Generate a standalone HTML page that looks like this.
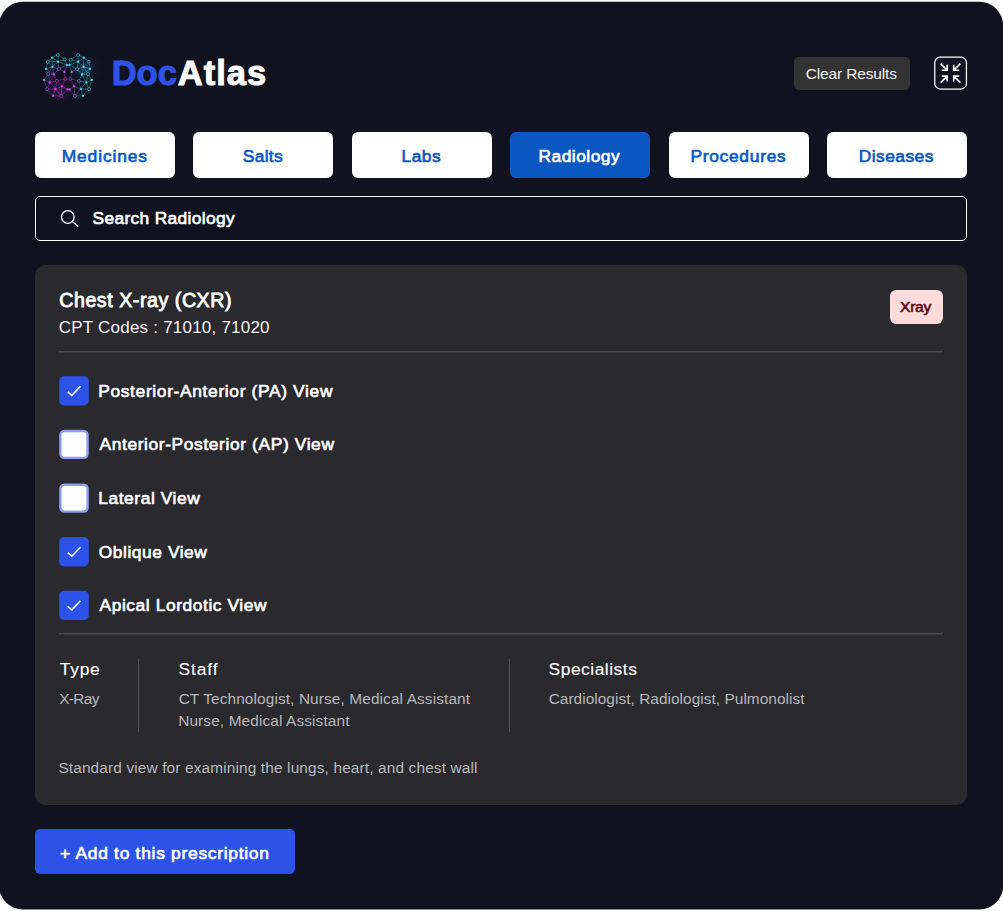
<!DOCTYPE html>
<html lang="en">
<head>
<meta charset="utf-8">
<title>DocAtlas</title>
<style>
*{box-sizing:border-box;margin:0;padding:0}
html,body{width:1003px;height:911px;background:#fff;overflow:hidden}
body{font-family:"Liberation Sans",Arial,sans-serif;color:#fff;position:relative}
.panel{position:absolute;left:0;top:0}
.t{position:absolute;white-space:nowrap;line-height:1;font-weight:400}
h1{font-size:inherit;font-weight:inherit}
.logo{position:absolute;left:30px;top:40px}
.clear{position:absolute;left:794px;top:56.6px;width:116px;height:33px;border-radius:5px;background:#333333}
.shrink{position:absolute;left:930px;top:52px}
.tab{position:absolute;top:132px;width:140px;height:46px;border-radius:6px;background:#fff}
.tab.on{background:#0b57c2}
.search{position:absolute;left:35px;top:196px;width:932px;height:45px;border:1px solid #fff;border-radius:5px}
.search svg{position:absolute;left:23px;top:11px}
.card{position:absolute;left:35px;top:265px;width:932px;height:539.5px;border-radius:10px;background:#29292e}
.badge{position:absolute;left:855px;top:25px;width:53px;height:34px;border-radius:6px;background:#ffdadb;color:#6b0f16}
.hr{position:absolute;left:24px;width:884px;height:2px;background:linear-gradient(#4a4a4f 0,#4a4a4f 50%,#38383d 50%,#38383d 100%)}
.cbs{position:absolute;left:20px;top:105px}
.vr{position:absolute;top:394px;width:1px;height:73px;background:#555559}
.add{position:absolute;left:35px;top:829px;width:259.5px;height:45px;border-radius:5px;background:#2d52e8}
</style>
</head>
<body>
<svg class="panel" width="1003" height="911" viewBox="0 0 1003 911"><rect x="-1" y="1.75" width="1004.2" height="907.8" rx="24" fill="#10121f"/></svg>
<header>
<svg class="logo" width="100" height="70" viewBox="0 0 100 70">
<defs><radialGradient id="gl1"><stop offset="0" stop-color="#1f4a8a" stop-opacity=".42"/><stop offset="1" stop-color="#10121f" stop-opacity="0"/></radialGradient><radialGradient id="gl2"><stop offset="0" stop-color="#7a1fa0" stop-opacity=".36"/><stop offset="1" stop-color="#10121f" stop-opacity="0"/></radialGradient></defs>
<circle cx="57" cy="28" r="17" fill="url(#gl1)"/><circle cx="50" cy="30" r="14" fill="url(#gl1)"/><circle cx="29" cy="50" r="17" fill="url(#gl2)"/>
<g stroke-width="0.45" opacity="0.85">
<line x1="27.9" y1="15.0" x2="22.1" y2="17.7" stroke="rgb(70, 220, 232)"/>
<line x1="27.9" y1="15.0" x2="28.1" y2="21.7" stroke="rgb(70, 220, 232)"/>
<line x1="27.9" y1="15.0" x2="34.9" y2="19.4" stroke="rgb(70, 220, 232)"/>
<line x1="22.1" y1="17.7" x2="17.7" y2="21.9" stroke="rgb(70, 220, 232)"/>
<line x1="22.1" y1="17.7" x2="28.1" y2="21.7" stroke="rgb(70, 220, 232)"/>
<line x1="22.1" y1="17.7" x2="22.4" y2="26.9" stroke="rgb(70, 220, 232)"/>
<line x1="17.7" y1="21.9" x2="28.1" y2="21.7" stroke="rgb(70, 220, 232)"/>
<line x1="17.7" y1="21.9" x2="16" y2="28.9" stroke="rgb(70, 220, 232)"/>
<line x1="17.7" y1="21.9" x2="22.4" y2="26.9" stroke="rgb(70, 220, 232)"/>
<line x1="28.1" y1="21.7" x2="34.9" y2="19.4" stroke="rgb(70, 220, 232)"/>
<line x1="28.1" y1="21.7" x2="22.4" y2="26.9" stroke="rgb(80, 202, 234)"/>
<line x1="28.1" y1="21.7" x2="28.9" y2="28.9" stroke="rgb(96, 173, 237)"/>
<line x1="28.1" y1="21.7" x2="36.9" y2="24.9" stroke="rgb(77, 206, 233)"/>
<line x1="34.9" y1="19.4" x2="36.9" y2="24.9" stroke="rgb(70, 220, 232)"/>
<line x1="16" y1="28.9" x2="22.4" y2="26.9" stroke="rgb(87, 189, 235)"/>
<line x1="16" y1="28.9" x2="18.1" y2="34.1" stroke="rgb(100, 165, 238)"/>
<line x1="16" y1="28.9" x2="23.9" y2="34.4" stroke="rgb(126, 135, 240)"/>
<line x1="22.4" y1="26.9" x2="28.9" y2="28.9" stroke="rgb(118, 142, 240)"/>
<line x1="22.4" y1="26.9" x2="18.1" y2="34.1" stroke="rgb(116, 144, 240)"/>
<line x1="22.4" y1="26.9" x2="23.9" y2="34.4" stroke="rgb(139, 123, 240)"/>
<line x1="28.9" y1="28.9" x2="36.9" y2="24.9" stroke="rgb(114, 146, 240)"/>
<line x1="28.9" y1="28.9" x2="34.4" y2="31.9" stroke="rgb(163, 101, 240)"/>
<line x1="28.9" y1="28.9" x2="23.9" y2="34.4" stroke="rgb(172, 95, 240)"/>
<line x1="36.9" y1="24.9" x2="34.4" y2="31.9" stroke="rgb(127, 134, 240)"/>
<line x1="34.4" y1="31.9" x2="35.4" y2="38.9" stroke="rgb(228, 61, 245)"/>
<line x1="18.1" y1="34.1" x2="23.9" y2="34.4" stroke="rgb(162, 102, 240)"/>
<line x1="18.1" y1="34.1" x2="14" y2="39.9" stroke="rgb(131, 130, 240)"/>
<line x1="18.1" y1="34.1" x2="19.7" y2="42.4" stroke="rgb(178, 91, 241)"/>
<line x1="23.9" y1="34.4" x2="19.7" y2="42.4" stroke="rgb(228, 61, 245)"/>
<line x1="23.9" y1="34.4" x2="26.9" y2="40.9" stroke="rgb(229, 60, 245)"/>
<line x1="14" y1="39.9" x2="19.7" y2="42.4" stroke="rgb(162, 102, 240)"/>
<line x1="14" y1="39.9" x2="17.1" y2="49.1" stroke="rgb(151, 111, 240)"/>
<line x1="19.7" y1="42.4" x2="26.9" y2="40.9" stroke="rgb(229, 60, 245)"/>
<line x1="19.7" y1="42.4" x2="25.4" y2="48.9" stroke="rgb(229, 60, 245)"/>
<line x1="19.7" y1="42.4" x2="17.1" y2="49.1" stroke="rgb(204, 76, 243)"/>
<line x1="26.9" y1="40.9" x2="35.4" y2="38.9" stroke="rgb(231, 58, 245)"/>
<line x1="26.9" y1="40.9" x2="31.9" y2="46.4" stroke="rgb(233, 56, 245)"/>
<line x1="26.9" y1="40.9" x2="25.4" y2="48.9" stroke="rgb(232, 57, 245)"/>
<line x1="35.4" y1="38.9" x2="31.9" y2="46.4" stroke="rgb(232, 57, 245)"/>
<line x1="31.9" y1="46.4" x2="25.4" y2="48.9" stroke="rgb(232, 57, 245)"/>
<line x1="31.9" y1="46.4" x2="37.4" y2="49.4" stroke="rgb(232, 57, 245)"/>
<line x1="31.9" y1="46.4" x2="31.1" y2="56" stroke="rgb(231, 58, 245)"/>
<line x1="25.4" y1="48.9" x2="17.1" y2="49.1" stroke="rgb(228, 61, 245)"/>
<line x1="25.4" y1="48.9" x2="22.9" y2="55.8" stroke="rgb(228, 61, 245)"/>
<line x1="25.4" y1="48.9" x2="31.1" y2="56" stroke="rgb(230, 59, 245)"/>
<line x1="17.1" y1="49.1" x2="22.9" y2="55.8" stroke="rgb(190, 84, 242)"/>
<line x1="37.4" y1="49.4" x2="31.1" y2="56" stroke="rgb(229, 60, 245)"/>
<line x1="22.9" y1="55.8" x2="31.1" y2="56" stroke="rgb(225, 63, 244)"/>
<line x1="48.1" y1="15" x2="53.8" y2="17.7" stroke="rgb(70, 220, 232)"/>
<line x1="48.1" y1="15" x2="40.7" y2="19.7" stroke="rgb(70, 220, 232)"/>
<line x1="48.1" y1="15" x2="48.2" y2="21.7" stroke="rgb(70, 220, 232)"/>
<line x1="53.8" y1="17.7" x2="48.2" y2="21.7" stroke="rgb(70, 220, 232)"/>
<line x1="53.8" y1="17.7" x2="58.8" y2="21.7" stroke="rgb(70, 220, 232)"/>
<line x1="53.8" y1="17.7" x2="53.6" y2="26.9" stroke="rgb(70, 220, 232)"/>
<line x1="40.7" y1="19.7" x2="48.2" y2="21.7" stroke="rgb(70, 220, 232)"/>
<line x1="40.7" y1="19.7" x2="39.4" y2="24.9" stroke="rgb(70, 220, 232)"/>
<line x1="48.2" y1="21.7" x2="39.4" y2="24.9" stroke="rgb(70, 220, 232)"/>
<line x1="48.2" y1="21.7" x2="53.6" y2="26.9" stroke="rgb(70, 220, 232)"/>
<line x1="48.2" y1="21.7" x2="47.1" y2="29.1" stroke="rgb(70, 220, 232)"/>
<line x1="58.8" y1="21.7" x2="53.6" y2="26.9" stroke="rgb(70, 220, 232)"/>
<line x1="58.8" y1="21.7" x2="60" y2="28.9" stroke="rgb(70, 220, 232)"/>
<line x1="39.4" y1="24.9" x2="47.1" y2="29.1" stroke="rgb(77, 207, 233)"/>
<line x1="39.4" y1="24.9" x2="41.7" y2="31.9" stroke="rgb(103, 161, 238)"/>
<line x1="53.6" y1="26.9" x2="47.1" y2="29.1" stroke="rgb(70, 220, 232)"/>
<line x1="53.6" y1="26.9" x2="60" y2="28.9" stroke="rgb(70, 220, 232)"/>
<line x1="53.6" y1="26.9" x2="52" y2="34.4" stroke="rgb(70, 220, 232)"/>
<line x1="53.6" y1="26.9" x2="58" y2="34.1" stroke="rgb(70, 220, 232)"/>
<line x1="47.1" y1="29.1" x2="41.7" y2="31.9" stroke="rgb(97, 171, 237)"/>
<line x1="47.1" y1="29.1" x2="52" y2="34.4" stroke="rgb(70, 220, 232)"/>
<line x1="60" y1="28.9" x2="52" y2="34.4" stroke="rgb(70, 220, 232)"/>
<line x1="60" y1="28.9" x2="58" y2="34.1" stroke="rgb(70, 220, 232)"/>
<line x1="41.7" y1="31.9" x2="40.4" y2="38.9" stroke="rgb(177, 92, 241)"/>
<line x1="52" y1="34.4" x2="58" y2="34.1" stroke="rgb(70, 220, 232)"/>
<line x1="52" y1="34.4" x2="48.9" y2="40.9" stroke="rgb(87, 190, 235)"/>
<line x1="52" y1="34.4" x2="56.3" y2="42.4" stroke="rgb(70, 220, 232)"/>
<line x1="58" y1="34.1" x2="56.3" y2="42.4" stroke="rgb(70, 220, 232)"/>
<line x1="58" y1="34.1" x2="61.8" y2="39.9" stroke="rgb(70, 220, 232)"/>
<line x1="40.4" y1="38.9" x2="48.9" y2="40.9" stroke="rgb(164, 100, 240)"/>
<line x1="40.4" y1="38.9" x2="44.1" y2="46.4" stroke="rgb(228, 61, 245)"/>
<line x1="48.9" y1="40.9" x2="56.3" y2="42.4" stroke="rgb(76, 208, 233)"/>
<line x1="48.9" y1="40.9" x2="44.1" y2="46.4" stroke="rgb(150, 113, 240)"/>
<line x1="48.9" y1="40.9" x2="50.8" y2="48.9" stroke="rgb(106, 156, 239)"/>
<line x1="56.3" y1="42.4" x2="61.8" y2="39.9" stroke="rgb(70, 220, 232)"/>
<line x1="56.3" y1="42.4" x2="50.8" y2="48.9" stroke="rgb(70, 220, 232)"/>
<line x1="56.3" y1="42.4" x2="59" y2="49.1" stroke="rgb(70, 220, 232)"/>
<line x1="61.8" y1="39.9" x2="59" y2="49.1" stroke="rgb(70, 220, 232)"/>
<line x1="44.1" y1="46.4" x2="39.4" y2="49.4" stroke="rgb(228, 61, 245)"/>
<line x1="44.1" y1="46.4" x2="50.8" y2="48.9" stroke="rgb(135, 127, 240)"/>
<line x1="44.1" y1="46.4" x2="44.9" y2="56" stroke="rgb(160, 104, 240)"/>
<line x1="39.4" y1="49.4" x2="44.9" y2="56" stroke="rgb(184, 87, 241)"/>
<line x1="50.8" y1="48.9" x2="59" y2="49.1" stroke="rgb(70, 220, 232)"/>
<line x1="50.8" y1="48.9" x2="44.9" y2="56" stroke="rgb(111, 149, 240)"/>
<line x1="50.8" y1="48.9" x2="53" y2="55.8" stroke="rgb(73, 213, 232)"/>
<line x1="59" y1="49.1" x2="53" y2="55.8" stroke="rgb(70, 220, 232)"/>
<line x1="44.9" y1="56" x2="53" y2="55.8" stroke="rgb(84, 193, 234)"/>
<line x1="36.9" y1="24.9" x2="39.4" y2="24.9" stroke="rgb(150,150,240)"/>
<line x1="37.4" y1="49.4" x2="39.4" y2="49.4" stroke="rgb(232,60,245)" stroke-width="1"/>
</g>
<circle cx="27.9" cy="15.0" r="1.5" fill="#10121f" stroke="rgb(70, 220, 232)" stroke-width="0.55"/>
<circle cx="22.1" cy="17.7" r="1.15" fill="rgb(70, 220, 232)"/>
<circle cx="17.7" cy="21.9" r="1.5" fill="#10121f" stroke="rgb(70, 220, 232)" stroke-width="0.55"/>
<circle cx="28.1" cy="21.7" r="1.15" fill="rgb(70, 220, 232)"/>
<circle cx="34.9" cy="19.4" r="1.5" fill="#10121f" stroke="rgb(70, 220, 232)" stroke-width="0.55"/>
<circle cx="16" cy="28.9" r="1.15" fill="rgb(74, 211, 232)"/>
<circle cx="22.4" cy="26.9" r="1.15" fill="rgb(94, 176, 236)"/>
<circle cx="28.9" cy="28.9" r="1.5" fill="#10121f" stroke="rgb(141, 121, 240)" stroke-width="0.55"/>
<circle cx="36.9" cy="24.9" r="1.15" fill="rgb(85, 192, 235)"/>
<circle cx="34.4" cy="31.9" r="1.15" fill="rgb(185, 87, 241)"/>
<circle cx="18.1" cy="34.1" r="1.5" fill="#10121f" stroke="rgb(132, 129, 240)" stroke-width="0.55"/>
<circle cx="23.9" cy="34.4" r="1.15" fill="rgb(201, 77, 242)"/>
<circle cx="14" cy="39.9" r="1.15" fill="rgb(120, 140, 240)"/>
<circle cx="19.7" cy="42.4" r="1.15" fill="rgb(225, 63, 244)"/>
<circle cx="26.9" cy="40.9" r="1.5" fill="#10121f" stroke="rgb(231, 58, 245)" stroke-width="0.55"/>
<circle cx="35.4" cy="38.9" r="1.5" fill="#10121f" stroke="rgb(230, 59, 245)" stroke-width="0.55"/>
<circle cx="31.9" cy="46.4" r="1.15" fill="rgb(233, 56, 245)"/>
<circle cx="25.4" cy="48.9" r="1.15" fill="rgb(230, 59, 245)"/>
<circle cx="17.1" cy="49.1" r="1.5" fill="#10121f" stroke="rgb(165, 99, 240)" stroke-width="0.55"/>
<circle cx="37.4" cy="49.4" r="1.15" fill="rgb(230, 59, 245)"/>
<circle cx="22.9" cy="55.8" r="1.15" fill="rgb(186, 87, 241)"/>
<circle cx="31.1" cy="56" r="1.5" fill="#10121f" stroke="rgb(228, 61, 245)" stroke-width="0.55"/>
<circle cx="48.1" cy="15" r="1.5" fill="#10121f" stroke="rgb(70, 220, 232)" stroke-width="0.55"/>
<circle cx="53.8" cy="17.7" r="1.15" fill="rgb(70, 220, 232)"/>
<circle cx="40.7" cy="19.7" r="1.5" fill="#10121f" stroke="rgb(70, 220, 232)" stroke-width="0.55"/>
<circle cx="48.2" cy="21.7" r="1.15" fill="rgb(70, 220, 232)"/>
<circle cx="58.8" cy="21.7" r="1.5" fill="#10121f" stroke="rgb(70, 220, 232)" stroke-width="0.55"/>
<circle cx="39.4" cy="24.9" r="1.15" fill="rgb(77, 207, 233)"/>
<circle cx="53.6" cy="26.9" r="1.15" fill="rgb(70, 220, 232)"/>
<circle cx="47.1" cy="29.1" r="1.5" fill="#10121f" stroke="rgb(70, 220, 232)" stroke-width="0.55"/>
<circle cx="60" cy="28.9" r="1.15" fill="rgb(70, 220, 232)"/>
<circle cx="41.7" cy="31.9" r="1.15" fill="rgb(131, 130, 240)"/>
<circle cx="52" cy="34.4" r="1.15" fill="rgb(70, 220, 232)"/>
<circle cx="58" cy="34.1" r="1.5" fill="#10121f" stroke="rgb(70, 220, 232)" stroke-width="0.55"/>
<circle cx="40.4" cy="38.9" r="1.5" fill="#10121f" stroke="rgb(228, 61, 245)" stroke-width="0.55"/>
<circle cx="48.9" cy="40.9" r="1.5" fill="#10121f" stroke="rgb(111, 148, 240)" stroke-width="0.55"/>
<circle cx="56.3" cy="42.4" r="1.15" fill="rgb(70, 220, 232)"/>
<circle cx="61.8" cy="39.9" r="1.15" fill="rgb(70, 220, 232)"/>
<circle cx="44.1" cy="46.4" r="1.15" fill="rgb(192, 83, 242)"/>
<circle cx="39.4" cy="49.4" r="1.15" fill="rgb(229, 60, 245)"/>
<circle cx="50.8" cy="48.9" r="1.15" fill="rgb(93, 179, 236)"/>
<circle cx="59" cy="49.1" r="1.5" fill="#10121f" stroke="rgb(70, 220, 232)" stroke-width="0.55"/>
<circle cx="44.9" cy="56" r="1.5" fill="#10121f" stroke="rgb(120, 140, 240)" stroke-width="0.55"/>
<circle cx="53" cy="55.8" r="1.15" fill="rgb(70, 220, 232)"/>
</svg>
<h1><span class="t" style="left:111.64px;top:56.00px;font-size:34.5px;color:#2d52e8;letter-spacing:0.082px;font-weight:700;-webkit-text-stroke:1.0px #2d52e8">Doc</span><span class="t" style="left:177.72px;top:56.00px;font-size:34.5px;color:#fff;letter-spacing:1.026px;font-weight:700;-webkit-text-stroke:1.0px #fff">Atlas</span></h1>
<div class="clear"><div class="t" style="left:11.79px;top:9.40px;font-size:15.5px;color:#f2f2f2;letter-spacing:-0.157px">Clear Results</div></div>
<svg class="shrink" width="44" height="44" viewBox="0 0 44 44" fill="none" stroke="#fff" stroke-width="1.5"><rect x="4.75" y="5.15" width="31.7" height="31.9" rx="5.6" stroke-width="1.25"/><path stroke-width="1.6" d="M10.6 11.6L17.2 18.2M11.7 18.2H17.2V12.7M30.4 11.6L23.7 18.2M29.2 18.2H23.7V12.7M10.6 30.6L17.2 24.1M11.7 24.1H17.2V29.6M30.4 30.6L23.7 24.1M29.2 24.1H23.7V29.6"/></svg>
</header>
<nav>
<div class="tab" style="left:35px"><div class="t" style="left:26.74px;top:16.00px;font-size:17.4px;color:#0b57c2;letter-spacing:0.863px;-webkit-text-stroke:0.65px #0b57c2">Medicines</div></div>
<div class="tab" style="left:193.4px"><div class="t" style="left:49.34px;top:16.00px;font-size:17.4px;color:#0b57c2;letter-spacing:0.333px;-webkit-text-stroke:0.65px #0b57c2">Salts</div></div>
<div class="tab" style="left:351.8px"><div class="t" style="left:49.71px;top:16.00px;font-size:17.4px;color:#0b57c2;letter-spacing:0.461px;-webkit-text-stroke:0.65px #0b57c2">Labs</div></div>
<div class="tab on" style="left:510.2px"><div class="t" style="left:28.29px;top:16.00px;font-size:17.4px;color:#fff;letter-spacing:0.480px;-webkit-text-stroke:0.65px #fff">Radiology</div></div>
<div class="tab" style="left:668.6px"><div class="t" style="left:21.79px;top:16.00px;font-size:17.4px;color:#0b57c2;letter-spacing:0.711px;-webkit-text-stroke:0.65px #0b57c2">Procedures</div></div>
<div class="tab" style="left:827px"><div class="t" style="left:31.73px;top:16.00px;font-size:17.4px;color:#0b57c2;letter-spacing:0.448px;-webkit-text-stroke:0.65px #0b57c2">Diseases</div></div>
</nav>
<div class="search"><svg width="22" height="22" viewBox="0 0 22 22" fill="none" stroke="#fff" stroke-width="1.3" stroke-linecap="round"><circle cx="8.8" cy="9.0" r="6.3"/><path d="M13.4 13.6L18.8 18.3"/></svg><div class="t" style="left:56.49px;top:13.00px;font-size:17.4px;color:#fff;letter-spacing:0.328px;-webkit-text-stroke:0.65px #fff">Search Radiology</div></div>
<main>
<section class="card">
<div class="t" style="left:24.27px;top:26.00px;font-size:19.6px;color:#fff;letter-spacing:0.554px;-webkit-text-stroke:0.85px #fff">Chest X-ray (CXR)</div>
<div class="t" style="left:23.81px;top:54.00px;font-size:17px;color:#f4f4f4;letter-spacing:0.219px">CPT Codes : 71010, 71020</div>
<div class="badge"><div class="t" style="left:10.08px;top:9.00px;font-size:15.5px;color:#5e0b13;letter-spacing:-0.227px;-webkit-text-stroke:0.65px #5e0b13">Xray</div></div>
<div class="hr" style="top:86px"></div>
<svg class="cbs" width="40" height="260" viewBox="0 0 40 260">
<rect x="4.2" y="6.2" width="29.6" height="29.3" rx="5" fill="#2d52e8"/><path d="M12.7 21.8l4.2 3.5l8.6-9" fill="none" stroke="#fff" stroke-width="1.6"/>
<rect x="5.4" y="61.0" width="27.2" height="26.9" rx="4" fill="#fff" stroke="#8c9df6" stroke-width="2.4"/>
<rect x="5.4" y="114.7" width="27.2" height="26.9" rx="4" fill="#fff" stroke="#8c9df6" stroke-width="2.4"/>
<rect x="4.2" y="167.1" width="29.6" height="29.3" rx="5" fill="#2d52e8"/><path d="M12.7 182.7l4.2 3.5l8.6-9" fill="none" stroke="#fff" stroke-width="1.6"/>
<rect x="4.2" y="220.7" width="29.6" height="29.3" rx="5" fill="#2d52e8"/><path d="M12.7 236.3l4.2 3.5l8.6-9" fill="none" stroke="#fff" stroke-width="1.6"/>
</svg>
<div class="t" style="left:63.22px;top:118.00px;font-size:17.4px;color:#fff;letter-spacing:0.645px;-webkit-text-stroke:0.65px #fff">Posterior-Anterior (PA) View</div>
<div class="t" style="left:64.47px;top:171.00px;font-size:17.4px;color:#fff;letter-spacing:0.607px;-webkit-text-stroke:0.65px #fff">Anterior-Posterior (AP) View</div>
<div class="t" style="left:63.22px;top:225.00px;font-size:17.4px;color:#fff;letter-spacing:0.565px;-webkit-text-stroke:0.65px #fff">Lateral View</div>
<div class="t" style="left:63.76px;top:279.00px;font-size:17.4px;color:#fff;letter-spacing:0.545px;-webkit-text-stroke:0.65px #fff">Oblique View</div>
<div class="t" style="left:64.47px;top:332.00px;font-size:17.4px;color:#fff;letter-spacing:0.571px;-webkit-text-stroke:0.65px #fff">Apical Lordotic View</div>
<div class="hr" style="top:368px"></div>
<div class="t" style="left:24.86px;top:396.00px;font-size:17.4px;color:#fff;letter-spacing:0.737px;-webkit-text-stroke:0.12px #fff">Type</div>
<div class="t" style="left:24.28px;top:426.00px;font-size:15.4px;color:#b8b8bc;letter-spacing:-0.669px">X-Ray</div>
<div class="vr" style="left:103px"></div>
<div class="t" style="left:143.58px;top:396.00px;font-size:17.4px;color:#fff;letter-spacing:0.891px;-webkit-text-stroke:0.12px #fff">Staff</div>
<div class="t" style="left:143.63px;top:426.00px;font-size:15.4px;color:#b8b8bc;letter-spacing:0.113px">CT Technologist, Nurse, Medical Assistant</div>
<div class="t" style="left:143.21px;top:448.00px;font-size:15.4px;color:#b8b8bc;letter-spacing:0.118px">Nurse, Medical Assistant</div>
<div class="vr" style="left:474px"></div>
<div class="t" style="left:513.58px;top:396.00px;font-size:17.4px;color:#fff;letter-spacing:0.517px;-webkit-text-stroke:0.12px #fff">Specialists</div>
<div class="t" style="left:513.63px;top:426.00px;font-size:15.4px;color:#b8b8bc;letter-spacing:0.049px">Cardiologist, Radiologist, Pulmonolist</div>
<div class="t" style="left:23.39px;top:495.00px;font-size:15.4px;color:#b8b8bc;letter-spacing:0.143px">Standard view for examining the lungs, heart, and chest wall</div>
</section>
<div class="add"><div class="t" style="left:25.00px;top:16.00px;font-size:17.4px;color:#fff;letter-spacing:0.719px;-webkit-text-stroke:0.65px #fff">+ Add to this prescription</div></div>
</main>
</body>
</html>
